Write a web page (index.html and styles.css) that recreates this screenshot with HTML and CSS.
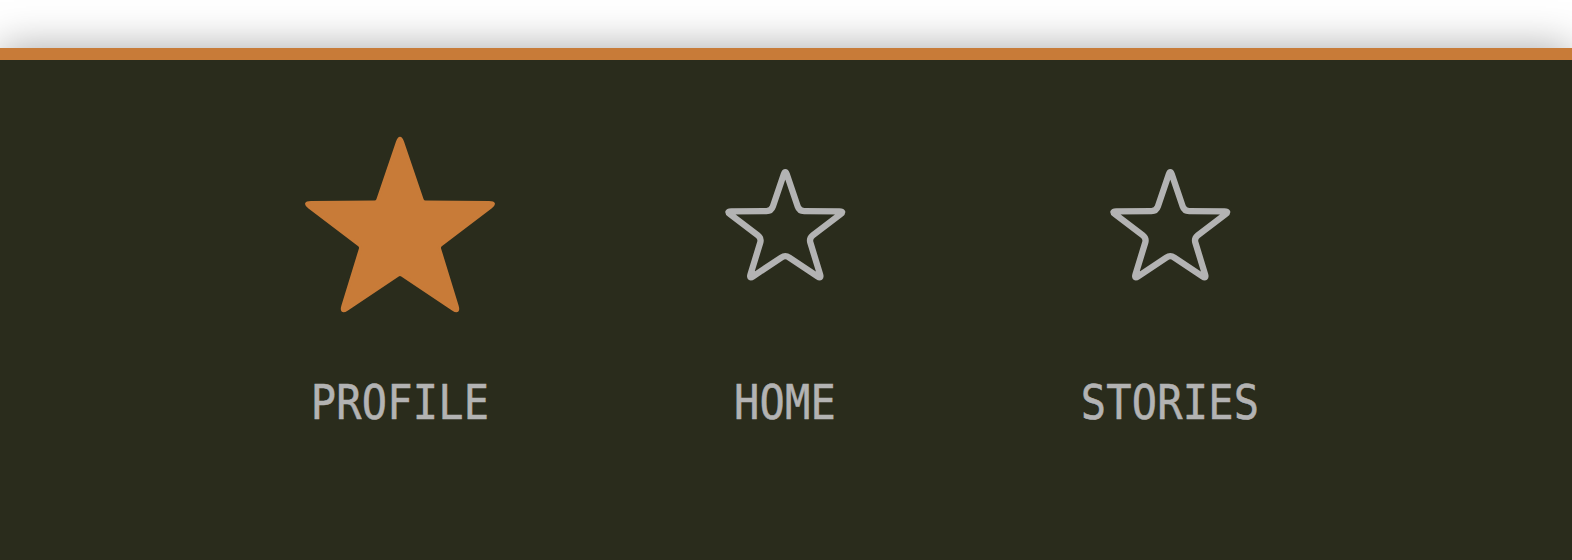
FILE: index.html
```html
<!DOCTYPE html>
<html lang="en">
<head>
<meta charset="utf-8">
<title>Nav</title>
<link rel="stylesheet" href="styles.css">
</head>
<body>
<div class="top"></div>
<nav class="bar">
  <ul class="items">
    <li class="item active">
      <div class="icon">
        <svg class="star-big" width="192" height="178" viewBox="0 0 192 178">
          <path class="star-fill" d="M93.42,5.97 Q96,-1.6 98.58,5.97 L118.2,63.63 Q119,66 121.5,66.02 L185,66.45 Q193,66.5 186.62,71.33 L136.89,108.99 Q134.9,110.5 135.63,112.89 L153.15,169.95 Q155.5,177.6 148.85,173.16 L98.08,139.29 Q96,137.9 93.92,139.29 L43.15,173.16 Q36.5,177.6 38.85,169.95 L56.37,112.89 Q57.1,110.5 55.11,108.99 L5.38,71.33 Q-1,66.5 7,66.45 L70.5,66.02 Q73,66 73.8,63.63 Z"/>
        </svg>
      </div>
      <span class="label">PROFILE</span>
    </li>
    <li class="item">
      <div class="icon">
        <svg class="star-small" width="126.6" height="117.5" viewBox="-8 -8 208 193">
          <path class="star-line" d="M93.42,5.97 Q96,-1.6 98.58,5.97 L116.42,58.43 Q119,66 127,66.05 L185,66.45 Q193,66.5 186.62,71.33 L141.28,105.67 Q134.9,110.5 137.25,118.15 L153.15,169.95 Q155.5,177.6 148.85,173.16 L102.65,142.34 Q96,137.9 89.35,142.34 L43.15,173.16 Q36.5,177.6 38.85,169.95 L54.75,118.15 Q57.1,110.5 50.72,105.67 L5.38,71.33 Q-1,66.5 7,66.45 L65,66.05 Q73,66 75.58,58.43 Z"/>
        </svg>
      </div>
      <span class="label">HOME</span>
    </li>
    <li class="item">
      <div class="icon">
        <svg class="star-small" width="126.6" height="117.5" viewBox="-8 -8 208 193">
          <path class="star-line" d="M93.42,5.97 Q96,-1.6 98.58,5.97 L116.42,58.43 Q119,66 127,66.05 L185,66.45 Q193,66.5 186.62,71.33 L141.28,105.67 Q134.9,110.5 137.25,118.15 L153.15,169.95 Q155.5,177.6 148.85,173.16 L102.65,142.34 Q96,137.9 89.35,142.34 L43.15,173.16 Q36.5,177.6 38.85,169.95 L54.75,118.15 Q57.1,110.5 50.72,105.67 L5.38,71.33 Q-1,66.5 7,66.45 L65,66.05 Q73,66 75.58,58.43 Z"/>
        </svg>
      </div>
      <span class="label">STORIES</span>
    </li>
  </ul>
</nav>
</body>
</html>
```
FILE: styles.css
```css
html, body {
  margin: 0;
  padding: 0;
  background: #ffffff;
  overflow: hidden;
}
.top {
  height: 48px;
  background: #ffffff;
}
.bar {
  border-top: 12px solid #c87b38;
  background: #2a2c1c;
  height: 500px;
  box-shadow: 0 0 40px rgba(0, 0, 0, 0.35);
  position: relative;
}
.items {
  list-style: none;
  margin: 0;
  padding: 70px 2px 0 0;
  display: flex;
  justify-content: center;
}
.item {
  width: 385px;
  display: flex;
  flex-direction: column;
  align-items: center;
}
.icon {
  height: 190px;
  display: flex;
  align-items: center;
  justify-content: center;
}
.icon svg {
  display: block;
  overflow: visible;
}
.star-fill {
  fill: #c87b38;
  stroke: #c87b38;
  stroke-width: 3;
  stroke-linejoin: round;
}
.star-line {
  fill: none;
  stroke: #b3b3b3;
  stroke-width: 10.35;
  stroke-linejoin: round;
}
.label {
  margin-top: 59px;
  font-family: "DejaVu Sans Mono", "Liberation Mono", monospace;
  font-size: 42px;
  line-height: 48px;
  letter-spacing: 0.2px;
  color: #b3b3b3;
  -webkit-text-stroke: 0.5px #b3b3b3;
  transform: scaleY(1.15);
}
```
